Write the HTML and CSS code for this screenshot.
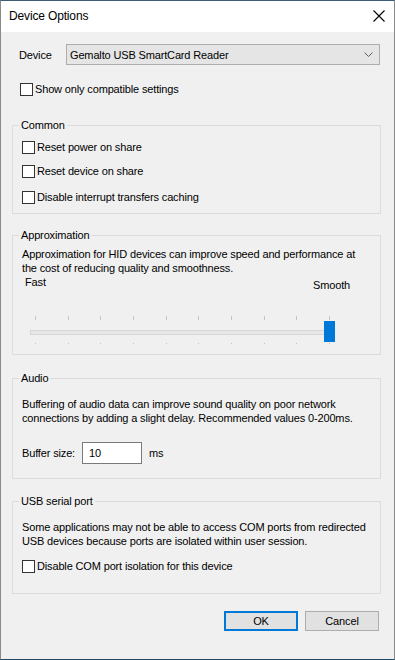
FILE: index.html
```html
<!DOCTYPE html>
<html lang="en">
<head>
    <meta charset="UTF-8">
    <title>Device Options</title>
    <link rel="stylesheet" href="styles.css">
</head>
<body>
    <div class="window">
        <div class="titlebar">
            <span class="title">Device Options</span>
            <span class="close">
                <svg width="12" height="12" viewBox="0 0 12 12"><path d="M0.5 0.5 L11.5 11.5 M11.5 0.5 L0.5 11.5" stroke="#000" stroke-width="1.1" fill="none"/></svg>
            </span>
        </div>
        <div class="content">
            <div class="device-row">
                <span class="device-label">Device</span>
                <div class="combo">
                    <span>Gemalto USB SmartCard Reader</span>
                    <svg width="9" height="5" viewBox="0 0 9 5"><path d="M0.5 0.5 L4.5 4.5 L8.5 0.5" stroke="#606060" stroke-width="1" fill="none"/></svg>
                </div>
            </div>
            <label class="check top-check"><input type="checkbox"><span>Show only compatible settings</span></label>

            <fieldset class="group common">
                <legend>Common</legend>
                <label class="check"><input type="checkbox"><span>Reset power on share</span></label>
                <label class="check second"><input type="checkbox"><span>Reset device on share</span></label>
                <label class="check third"><input type="checkbox"><span>Disable interrupt transfers caching</span></label>
            </fieldset>

            <fieldset class="group approx">
                <legend>Approximation</legend>
                <p class="desc">Approximation for HID devices can improve speed and performance at<br>the cost of reducing quality and smoothness.</p>
                <div class="scale-labels">
                    <span class="fast">Fast</span>
                    <span class="smooth">Smooth</span>
                </div>
                <div class="slider">
                    <div class="ticks top">
                        <i></i><i></i><i></i><i></i><i></i><i></i><i></i><i></i><i></i><i></i>
                    </div>
                    <div class="track"></div>
                    <div class="ticks bottom">
                        <i></i><i></i><i></i><i></i><i></i><i></i><i></i><i></i><i></i><i></i>
                    </div>
                    <div class="thumb"></div>
                </div>
            </fieldset>

            <fieldset class="group audio">
                <legend>Audio</legend>
                <p class="desc">Buffering of audio data can improve sound quality on poor network<br>connections by adding a slight delay. Recommended values 0-200ms.</p>
                <div class="buffer-row">
                    <span class="buffer-label">Buffer size:</span>
                    <input class="textbox" type="text" value="10">
                    <span class="unit">ms</span>
                </div>
            </fieldset>

            <fieldset class="group usb">
                <legend>USB serial port</legend>
                <p class="desc">Some applications may not be able to access COM ports from redirected<br>USB devices because ports are isolated within user session.</p>
                <label class="check"><input type="checkbox"><span>Disable COM port isolation for this device</span></label>
            </fieldset>

            <div class="buttons">
                <button class="btn default">OK</button>
                <button class="btn">Cancel</button>
            </div>
        </div>
    </div>
</body>
</html>
```

FILE: styles.css
```css
body {
    margin: 0;
    background: #1c4a6b;
    font-family: "Liberation Sans", Arial, sans-serif;
    font-size: 11px;
    letter-spacing: -0.15px;
    color: #000;
}

.window {
    width: 395px;
    height: 660px;
    box-sizing: border-box;
    border: 1px solid #8a8a8a;
    border-top-color: #3a5c78;
    border-bottom-color: #1c4a6b;
    background: #f0f0f0;
    display: flex;
    flex-direction: column;
    overflow: hidden;
}

.titlebar {
    flex-shrink: 0;
    height: 31px;
    background: #fff;
    display: flex;
    align-items: center;
    justify-content: space-between;
    padding: 0 9px 0 8px;
}

.title {
    font-size: 12px;
    margin-top: -2px;
}

.close {
    display: flex;
    margin-top: -1px;
}

.content {
    flex: 1;
    display: flex;
    flex-direction: column;
}

.device-row {
    display: flex;
    align-items: center;
    margin-top: 12px;
    padding-left: 18px;
}

.device-label {
    width: 47px;
}

.combo {
    width: 314px;
    height: 21px;
    box-sizing: border-box;
    border: 1px solid #adadad;
    background: #e5e5e5;
    display: flex;
    align-items: center;
    justify-content: space-between;
    padding: 0 6px 0 3px;
}

.check {
    display: flex;
    align-items: center;
    height: 13px;
    line-height: 13px;
    white-space: nowrap;
}

.check input {
    appearance: none;
    margin: 0 2px 0 0;
    width: 13px;
    height: 13px;
    border: 1px solid #333;
    background: #fff;
    box-sizing: border-box;
    flex-shrink: 0;
}

.top-check {
    margin-top: 18px;
    padding-left: 19px;
}

.group {
    flex-shrink: 0;
    margin: 0 0 0 11px;
    width: 369px;
    box-sizing: border-box;
    border: 1px solid #dcdcdc;
    padding: 0 9px;
    min-width: 0;
}

.group legend {
    padding: 0 2px;
    margin-left: -3px;
    line-height: 15px;
    height: 15px;
}

.desc {
    margin: 0;
    line-height: 14px;
    white-space: nowrap;
}

.common {
    margin-top: 22px;
    padding-top: 8px;
    padding-bottom: 9px;
}

.common .second {
    margin-top: 11px;
}

.common .third {
    margin-top: 13px;
}

.approx {
    margin-top: 14px;
    padding-bottom: 10px;
}

.approx .desc {
    margin-top: 4px;
}

.scale-labels {
    display: flex;
    align-items: flex-start;
    height: 17px;
    line-height: 14px;
    padding-left: 3px;
}

.fast {
    width: 288px;
}

.smooth {
    margin-top: 3px;
}

.slider {
    position: relative;
    width: 304px;
    margin: 24px 0 0 8px;
}

.ticks {
    display: flex;
    justify-content: space-between;
    padding: 0 4px 0 5px;
}

.ticks i {
    display: block;
    width: 1px;
    background: #c4c4c4;
}

.ticks.top i {
    height: 4px;
}

.ticks.bottom {
    margin-top: 8px;
}

.ticks.bottom i {
    height: 1px;
}

.track {
    margin-top: 10px;
    height: 5px;
    box-sizing: border-box;
    border: 1px solid #d6d6d6;
    background: #e7e7e7;
}

.thumb {
    position: absolute;
    left: 294px;
    top: 5px;
    width: 11px;
    height: 21px;
    background: #0078d7;
}

.audio {
    margin-top: 16px;
    padding-bottom: 14px;
}

.audio .desc {
    margin-top: 11px;
}

.buffer-row {
    display: flex;
    align-items: center;
    margin-top: 17px;
}

.buffer-label {
    width: 60px;
}

.textbox {
    width: 60px;
    height: 22px;
    box-sizing: border-box;
    border: 1px solid #7a7a7a;
    background: #fff;
    font: inherit;
    letter-spacing: inherit;
    padding: 0 0 0 6px;
    margin: 0;
}

.unit {
    margin-left: 7px;
}

.usb {
    margin-top: 15px;
    padding-bottom: 20px;
}

.usb .desc {
    margin-top: 11px;
}

.usb .check {
    margin-top: 12px;
}

.buttons {
    display: flex;
    justify-content: flex-end;
    gap: 7px;
    margin-top: 17px;
    padding-right: 15px;
}

.btn {
    width: 74px;
    height: 20px;
    box-sizing: border-box;
    border: 1px solid #adadad;
    background: #e1e1e1;
    font: inherit;
    letter-spacing: inherit;
    padding: 0;
    margin: 0;
    color: #000;
}

.btn.default {
    border: 2px solid #0078d7;
}
```
